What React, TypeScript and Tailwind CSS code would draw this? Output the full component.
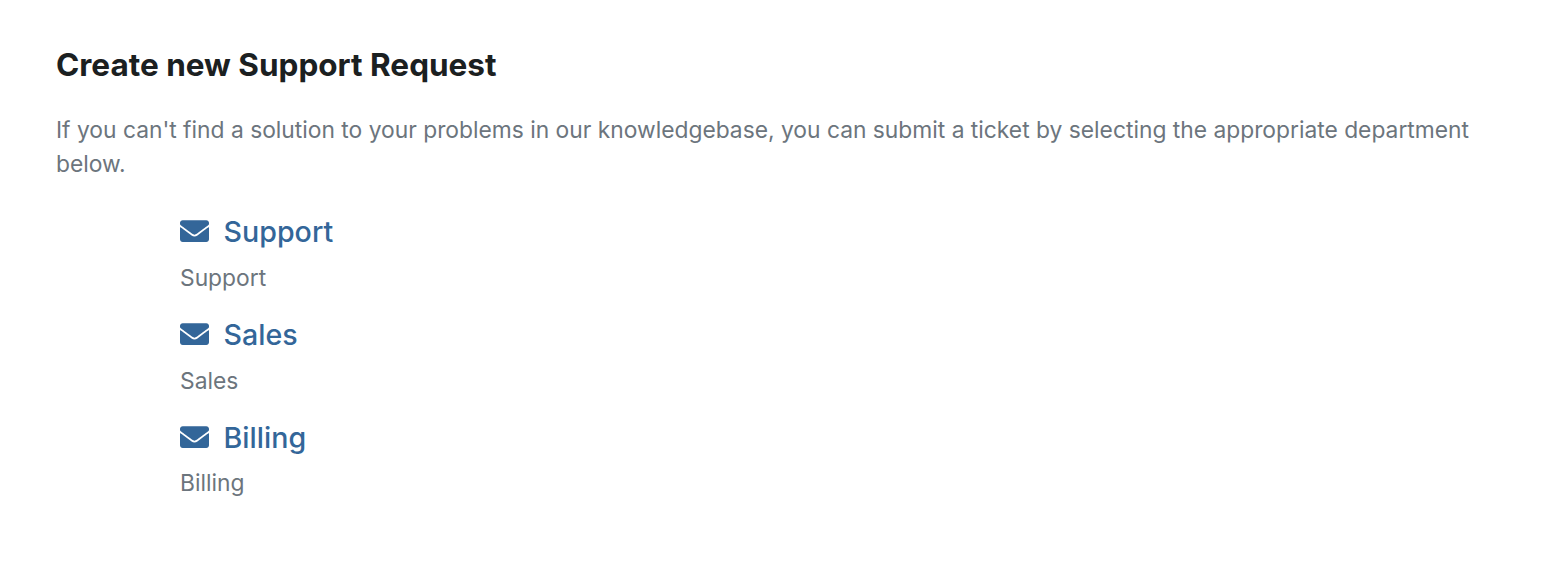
import { FaEnvelope } from "react-icons/fa";

const departments = [
  { name: "Support", description: "Support", href: "#support" },
  { name: "Sales", description: "Sales", href: "#sales" },
  { name: "Billing", description: "Billing", href: "#billing" },
];

export default function App() {
  return (
    <main className="min-h-screen bg-white px-14 pt-[45px] font-['Inter',sans-serif] text-[22.8px] leading-[34px] text-[#6c757d]">
      <h1 className="text-[31.5px] font-bold leading-10 text-[#1b2021]">
        Create new Support Request
      </h1>
      <p className="mt-7">
        If you can't find a solution to your problems in our knowledgebase, you
        can submit a ticket by selecting the appropriate department below.
      </p>
      <ul className="mt-[33.3px] space-y-[22.3px] pl-[124px]">
        {departments.map((d) => (
          <li key={d.name}>
            <a
              href={d.href}
              className="flex items-start gap-[14.6px] text-[28.6px] font-medium leading-[36px] text-[#336699]"
            >
              <FaEnvelope
                viewBox="0 64 512 384"
                className="mt-[5.9px] h-[22px] w-[29px]"
              />
              {d.name}
            </a>
            <p className="mt-[10.5px]">{d.description}</p>
          </li>
        ))}
      </ul>
    </main>
  );
}
